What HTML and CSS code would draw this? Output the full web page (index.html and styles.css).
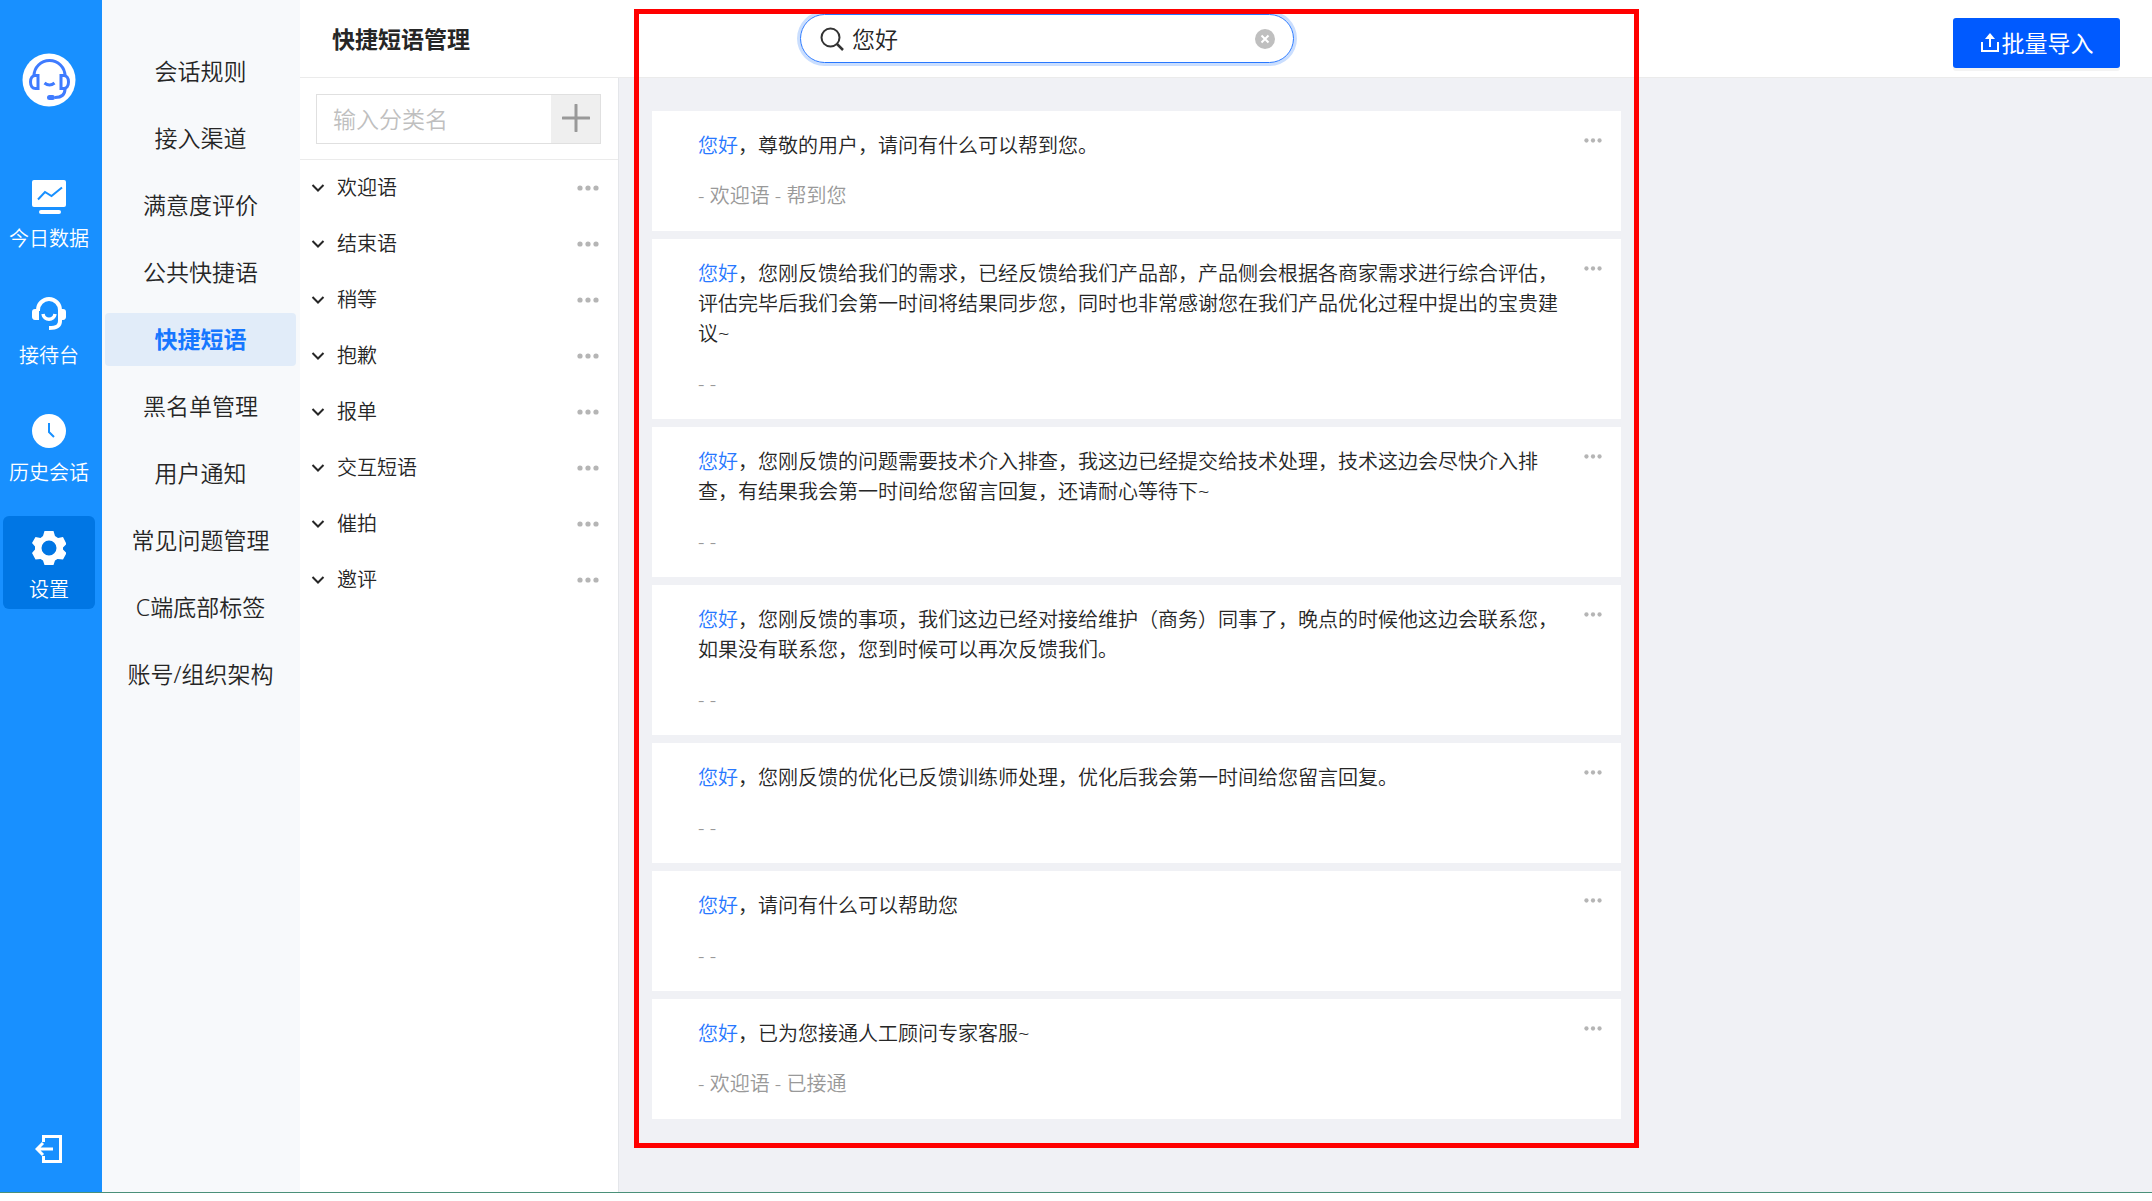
FILE: index.html
```html
<!DOCTYPE html>
<html lang="zh-CN">
<head>
<meta charset="utf-8">
<title>快捷短语管理</title>
<link rel="stylesheet" href="styles.css">
</head>
<body>
<svg width="0" height="0" class="sprite" aria-hidden="true">
  <symbol id="dots" viewBox="0 0 22 6"><circle cx="3" cy="3" r="2.6"/><circle cx="11" cy="3" r="2.6"/><circle cx="19" cy="3" r="2.6"/></symbol>
  <symbol id="chevron" viewBox="0 0 14 10"><path d="M1.5 2 7 7.5 12.500 2" fill="none" stroke="currentColor" stroke-width="2"/></symbol>
</svg>
<div class="app">
  <nav class="rail">
    <svg class="logo" viewBox="0 0 54 54"><circle cx="27" cy="27" r="26.500" fill="#fff"/><g fill="none" stroke="#3f7bff" stroke-width="3"><path d="M12 23a15.500 15.500 0 0 1 31 0"/><path d="M16 22.500v13h-2.500c-3 0-5-2.500-5-6.500s2-6.500 5-6.500zM39 22.500v13h2.500c3 0 5-2.500 5-6.500s-2-6.500-5-6.500z"/><path d="M22.500 30q5 4 10 0"/><path d="M43 36c0 6-4 8.500-10 8.500"/></g><rect x="25" y="42" width="8" height="5" rx="2.500" fill="#3f7bff"/></svg>
    <a class="rail-item" href="#"><svg class="rail-icon" viewBox="0 0 34 34"><rect width="34" height="27" rx="2" fill="#fff"/><rect x="7" y="30" width="22" height="4" rx="2" fill="#fff"/><path d="M6 19.500 13 12l6.500 4L30 7.500" fill="none" stroke="#1890ff" stroke-width="2"/></svg>今日数据</a>
    <a class="rail-item" href="#"><svg class="rail-icon" viewBox="0 0 34 34"><g fill="none" stroke="#fff" stroke-width="4"><path d="M6 14v-1a11 11 0 0 1 22 0v11c0 5-3 7-11 7"/><path d="M11 17c1 7 11 7 12 0" stroke-width="3.500"/></g><path d="M7 12v11H3c-2 0-3-1.500-3-3v-5c0-2 1-3 3-3zM27 12v11h4c2 0 3-1.500 3-3v-5c0-2-1-3-3-3z" fill="#fff"/></svg>接待台</a>
    <a class="rail-item" href="#"><svg class="rail-icon" viewBox="0 0 34 34"><circle cx="17" cy="17" r="17" fill="#fff"/><path d="M17 9v9l5 5" fill="none" stroke="#1890ff" stroke-width="2"/></svg>历史会话</a>
    <a class="rail-item active" href="#"><svg class="rail-icon" viewBox="0 0 34 34"><path fill="#fff" fill-rule="evenodd" d="M12.500 0h9l1.500 5 3 2 5-1 3.500 7-3.500 3.500v2l3.500 3.500-3.500 6.500-5.500-.5-2.500 1.500-1.500 4.500h-9L11 29.500 8.500 28 3.500 28.500 0 22l3-3.500v-3L0 12l3.500-6 5 1L11 5zM17 9.500a7.500 7.500 0 1 0 0 15 7.500 7.500 0 0 0 0-15z"/></svg>设置</a>
    <button class="logout" type="button" aria-label="退出"><svg viewBox="0 0 28 28" width="28" height="28"><path d="M8.500 7V1.500h17v25h-17V21M18 14H2.500M8 8l-6 6 6 6" fill="none" stroke="#fff" stroke-width="3"/></svg></button>
  </nav>

  <nav class="submenu">
    <a href="#">会话规则</a>
    <a href="#">接入渠道</a>
    <a href="#">满意度评价</a>
    <a href="#">公共快捷语</a>
    <a href="#" class="active">快捷短语</a>
    <a href="#">黑名单管理</a>
    <a href="#">用户通知</a>
    <a href="#">常见问题管理</a>
    <a href="#">C端底部标签</a>
    <a href="#">账号/组织架构</a>
  </nav>

  <section class="workspace">
    <header class="topbar">
      <h1>快捷短语管理</h1>
      <label class="search">
        <svg viewBox="0 0 24 24" width="24" height="24"><circle cx="10.500" cy="10.500" r="9" fill="none" stroke="#333" stroke-width="2"/><path d="m17 17 6 6" stroke="#333" stroke-width="2.500"/></svg>
        <input type="text" value="您好" aria-label="搜索短语">
        <button type="button" class="clear" aria-label="清除"><svg viewBox="0 0 20 20" width="20" height="20"><circle cx="10" cy="10" r="10" fill="#bfbfbf"/><path d="m6.500 6.500 7 7m0-7-7 7" stroke="#fff" stroke-width="2"/></svg></button>
      </label>
      <button type="button" class="import"><svg viewBox="0 0 20 20" width="20" height="20"><path d="M2 9v9h16V9M10 14V4" fill="none" stroke="#fff" stroke-width="2"/><path d="m10 0 5 6H5z" fill="#fff"/></svg>批量导入</button>
    </header>

    <div class="body">
      <aside class="categories">
        <form class="add">
          <input type="text" placeholder="输入分类名" aria-label="分类名">
          <button type="button" aria-label="添加分类"><svg viewBox="0 0 28 28" width="28" height="28"><path d="M14 1v26M1 14h26" stroke="#999" stroke-width="3" stroke-linecap="round"/></svg></button>
        </form>
        <ul>
          <li><svg class="chev"><use href="#chevron"/></svg><span>欢迎语</span><button class="more" type="button" aria-label="更多"><svg><use href="#dots"/></svg></button></li>
          <li><svg class="chev"><use href="#chevron"/></svg><span>结束语</span><button class="more" type="button" aria-label="更多"><svg><use href="#dots"/></svg></button></li>
          <li><svg class="chev"><use href="#chevron"/></svg><span>稍等</span><button class="more" type="button" aria-label="更多"><svg><use href="#dots"/></svg></button></li>
          <li><svg class="chev"><use href="#chevron"/></svg><span>抱歉</span><button class="more" type="button" aria-label="更多"><svg><use href="#dots"/></svg></button></li>
          <li><svg class="chev"><use href="#chevron"/></svg><span>报单</span><button class="more" type="button" aria-label="更多"><svg><use href="#dots"/></svg></button></li>
          <li><svg class="chev"><use href="#chevron"/></svg><span>交互短语</span><button class="more" type="button" aria-label="更多"><svg><use href="#dots"/></svg></button></li>
          <li><svg class="chev"><use href="#chevron"/></svg><span>催拍</span><button class="more" type="button" aria-label="更多"><svg><use href="#dots"/></svg></button></li>
          <li><svg class="chev"><use href="#chevron"/></svg><span>邀评</span><button class="more" type="button" aria-label="更多"><svg><use href="#dots"/></svg></button></li>
        </ul>
      </aside>

      <main>
        <div class="results">
          <article class="card"><div><p><em>您好</em>，尊敬的用户，请问有什么可以帮到您。</p><p class="path">- 欢迎语 - 帮到您</p></div><button class="more" type="button" aria-label="更多"><svg><use href="#dots"/></svg></button></article>
          <article class="card"><div><p><em>您好</em>，您刚反馈给我们的需求，已经反馈给我们产品部，产品侧会根据各商家需求进行综合评估，评估完毕后我们会第一时间将结果同步您，同时也非常感谢您在我们产品优化过程中提出的宝贵建议~</p><p class="path">- -</p></div><button class="more" type="button" aria-label="更多"><svg><use href="#dots"/></svg></button></article>
          <article class="card"><div><p><em>您好</em>，您刚反馈的问题需要技术介入排查，我这边已经提交给技术处理，技术这边会尽快介入排查，有结果我会第一时间给您留言回复，还请耐心等待下~</p><p class="path">- -</p></div><button class="more" type="button" aria-label="更多"><svg><use href="#dots"/></svg></button></article>
          <article class="card"><div><p><em>您好</em>，您刚反馈的事项，我们这边已经对接给维护（商务）同事了，晚点的时候他这边会联系您，如果没有联系您，您到时候可以再次反馈我们。</p><p class="path">- -</p></div><button class="more" type="button" aria-label="更多"><svg><use href="#dots"/></svg></button></article>
          <article class="card"><div><p><em>您好</em>，您刚反馈的优化已反馈训练师处理，优化后我会第一时间给您留言回复。</p><p class="path">- -</p></div><button class="more" type="button" aria-label="更多"><svg><use href="#dots"/></svg></button></article>
          <article class="card"><div><p><em>您好</em>，请问有什么可以帮助您</p><p class="path">- -</p></div><button class="more" type="button" aria-label="更多"><svg><use href="#dots"/></svg></button></article>
          <article class="card"><div><p><em>您好</em>，已为您接通人工顾问专家客服~</p><p class="path">- 欢迎语 - 已接通</p></div><button class="more" type="button" aria-label="更多"><svg><use href="#dots"/></svg></button></article>
        </div>
      </main>
    </div>
  </section>
</div>
</body>
</html>
```
FILE: styles.css
```css
* { box-sizing: border-box; }
body {
  margin: 0;
  padding-bottom: 8px;
  background: #fff;
  color: #262626;
  font: 350 20px/30px "Noto Sans", "Noto Sans CJK SC", sans-serif;
}
h1, p, ul { margin: 0; padding: 0; }
ul { list-style: none; }
a { color: inherit; text-decoration: none; }
button, input { margin: 0; padding: 0; border: 0; background: none; font: inherit; color: inherit; outline: 0; }
button { display: flex; align-items: center; justify-content: center; }
svg { display: block; flex: none; }
.sprite { position: absolute; }

.app {
  display: flex;
  min-height: calc(100vh - 8px);
  border-bottom: 1px solid #4a9079;
}

/* Primary navigation */
.rail {
  display: flex;
  flex-direction: column;
  align-items: center;
  gap: 24px;
  width: 102px;
  padding: 53px 7px 25px 3px;
  background: #1890ff;
  color: #fff;
  flex: none;
}
.logo { width: 54px; height: 54px; margin-bottom: 34px; }
.rail-item {
  display: flex;
  flex-direction: column;
  align-items: center;
  gap: 10px;
  width: 92px;
  height: 93px;
  padding-top: 15px;
  border-radius: 6px;
  white-space: nowrap;
}
.rail-item.active { background: #0076e4; }
.rail-icon { width: 34px; height: 34px; }
.logout { margin-top: auto; width: 40px; height: 36px; }

/* Settings menu */
.submenu {
  display: flex;
  flex-direction: column;
  gap: 14px;
  width: 198px;
  padding: 45px 4px 0 3px;
  background: #f7f9fb;
  font-size: 23px;
  flex: none;
}
.submenu a {
  height: 53px;
  line-height: 53px;
  border-radius: 4px;
  text-align: center;
}
.submenu .active { background: #e1ecf9; color: #1677ff; font-weight: 700; }

/* Header */
.workspace { flex: 1; min-width: 0; display: flex; flex-direction: column; }
.topbar {
  display: flex;
  align-items: center;
  height: 78px;
  padding-right: 32px;
  border-bottom: 1px solid #ebebeb;
}
h1 { width: 500px; padding-left: 32px; font-size: 23px; font-weight: 700; flex: none; }
.search {
  display: flex;
  align-items: center;
  gap: 8px;
  width: 494px;
  height: 49px;
  padding: 0 18px 0 19px;
  border: 1px solid #2878ff;
  border-radius: 25px;
  box-shadow: 0 0 0 3px #cadefe;
  font-size: 23px;
}
.search input { flex: 1; min-width: 0; }
.import {
  gap: 2px;
  width: 167px;
  height: 50px;
  margin: 9px 0 0 auto;
  border-radius: 3px;
  background: #005aff;
  box-shadow: 0 3px 0 #f3f3f3;
  color: #fff;
  font-size: 23px;
  font-weight: 400;
}

/* Categories */
.body { flex: 1; display: flex; }
.categories { width: 319px; border-right: 1px solid #e4e6ea; flex: none; }
.add { display: flex; padding: 16px 17px 15px 16px; border-bottom: 1px solid #ebebeb; }
.add input {
  flex: 1;
  min-width: 0;
  height: 50px;
  padding-left: 16px;
  border: 1px solid #e0e0e0;
  border-right: 0;
  font-size: 23px;
}
.add input::placeholder { color: #bfbfbf; opacity: 1; }
.add button {
  width: 50px;
  padding-bottom: 2px;
  border: 1px solid #e0e0e0;
  border-left: 0;
  background: #efefef;
}
.categories li {
  display: flex;
  align-items: center;
  gap: 12px;
  height: 56px;
  padding: 0 19px 0 11px;
}
.categories span { flex: 1; }
.chev { width: 14px; height: 10px; }
.more svg { width: 22px; height: 6px; fill: #b5b5b5; }

/* Search results */
main { flex: 1; min-width: 0; padding: 0 15px; background: #f0f1f5; }
.results {
  position: relative;
  display: flex;
  flex-direction: column;
  gap: 8px;
  max-width: 1005px;
  padding: 33px 18px 29px;
}
.results::after {
  content: "";
  position: absolute;
  inset: -69px 0 0;
  border: 5px solid #f00;
  pointer-events: none;
}
.card {
  display: flex;
  align-items: flex-start;
  gap: 16px;
  padding: 20px 19px 20px 46px;
  background: #fff;
}
.card div { flex: 1; }
.card p { max-width: 870px; }
.card em { color: #2878ff; font-style: normal; }
.card .path { margin-top: 20px; color: #999; }
.card .more { height: 18px; }
.card .more svg { width: 18px; height: 5px; }
```
